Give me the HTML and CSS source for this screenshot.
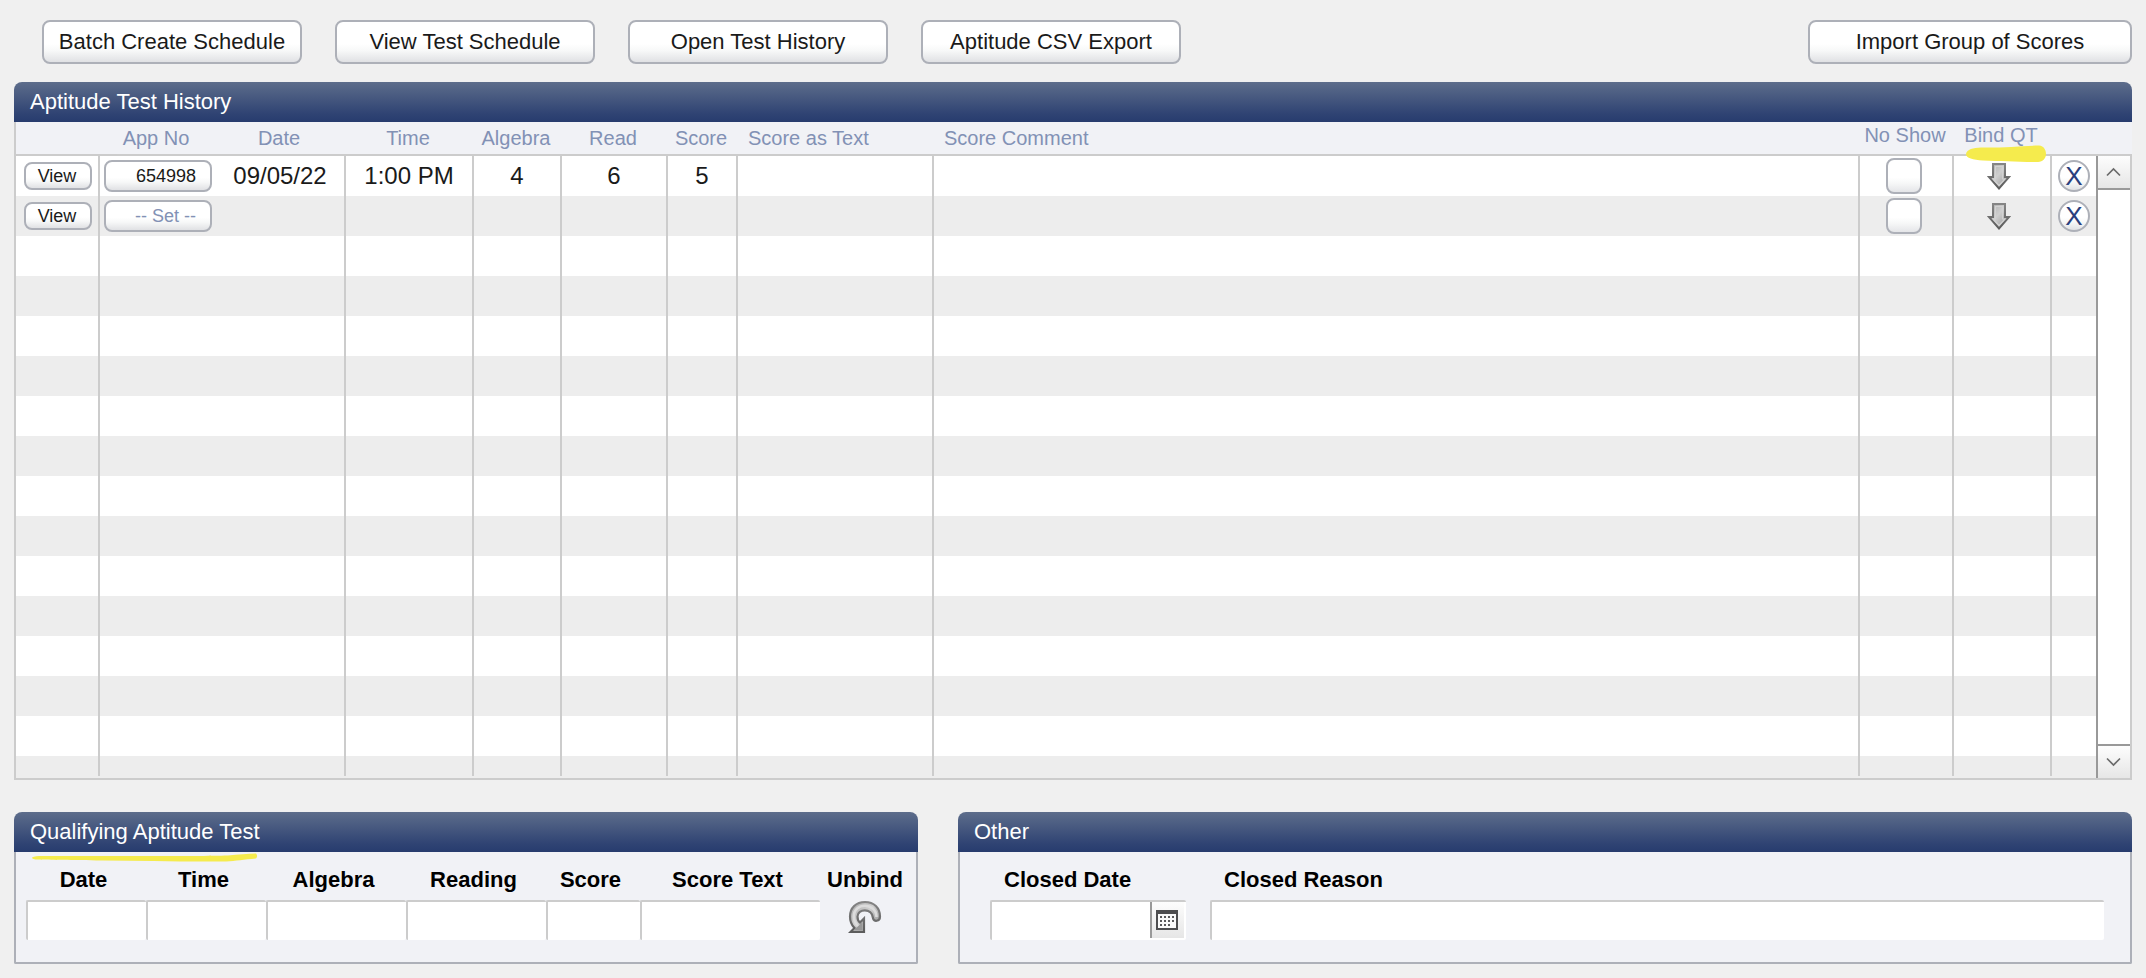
FILE: index.html
```html
<!DOCTYPE html>
<html lang="en">
<head>
<meta charset="utf-8">
<title>Aptitude Tests</title>
<link rel="stylesheet" href="styles.css">
</head>
<body>
<svg class="defs" aria-hidden="true">
  <defs>
    <linearGradient id="metal" x1="0" y1="0" x2="1" y2="1">
      <stop offset="0" stop-color="#a8a8a8"/>
      <stop offset="0.45" stop-color="#cfcfcf"/>
      <stop offset="1" stop-color="#8a8a8a"/>
    </linearGradient>
    <linearGradient id="edge" x1="0" y1="0" x2="0" y2="1">
      <stop offset="0" stop-color="#858585"/>
      <stop offset="1" stop-color="#5c5c5c"/>
    </linearGradient>
    <symbol id="arrow-down" viewBox="0 0 24 27">
      <path d="M6 1H18V14H22L12 25.500L2 14H6Z" fill="url(#metal)" stroke="url(#edge)" stroke-width="2"/>
      <path d="M8.500 3.500H15.500V16H18L12 22.500L6 16H8.500Z" fill="none" stroke="#d2d2d2" stroke-width="1.200"/>
    </symbol>
  </defs>
</svg>

<nav class="toolbar">
  <button class="btn btn-main" type="button">Batch Create Schedule</button>
  <button class="btn btn-main" type="button">View Test Schedule</button>
  <button class="btn btn-main" type="button">Open Test History</button>
  <button class="btn btn-main" type="button">Aptitude CSV Export</button>
  <button class="btn btn-main btn-import" type="button">Import Group of Scores</button>
</nav>

<section class="history">
  <h2 class="panel-title">Aptitude Test History</h2>
  <div class="history-body">
    <div class="table-area">
      <table class="grid">
        <colgroup>
          <col class="c-view"><col class="c-app"><col class="c-date"><col class="c-time">
          <col class="c-algebra"><col class="c-read"><col class="c-score"><col class="c-text">
          <col><col class="c-noshow"><col class="c-bind"><col class="c-remove">
        </colgroup>
        <thead>
          <tr>
            <th></th><th>App No</th><th>Date</th><th>Time</th><th>Algebra</th><th>Read</th><th>Score</th>
            <th class="left">Score as Text</th><th class="left">Score Comment</th>
            <th class="raised">No Show</th>
            <th class="raised marked">Bind QT
              <svg class="mark-bind" viewBox="0 0 82 18" aria-hidden="true"><path d="M1 9C2 4 8 3 16 2.500C36 3 56 1 74 .5C79 1 81 5 81 9C81 13 78 17 73 17C52 17 36 16 18 15.500C8 15 1 13 1 9Z" fill="#f5eb4d"/></svg>
            </th>
            <th></th>
          </tr>
        </thead>
        <tbody>
          <tr>
            <td><button class="btn btn-view" type="button">View</button></td>
            <td class="open"><button class="btn btn-app" type="button">654998</button></td>
            <td>09/05/22</td><td>1:00 PM</td><td>4</td><td>6</td><td>5</td><td></td><td></td>
            <td><input class="check" type="checkbox" aria-label="No Show"></td>
            <td><button class="icon-btn" type="button" aria-label="Bind"><svg width="24" height="27"><use href="#arrow-down"/></svg></button></td>
            <td class="open"><button class="btn btn-remove" type="button">X</button></td>
          </tr>
          <tr>
            <td><button class="btn btn-view" type="button">View</button></td>
            <td class="open"><button class="btn btn-app btn-set" type="button">-- Set --</button></td>
            <td></td><td></td><td></td><td></td><td></td><td></td><td></td>
            <td><input class="check" type="checkbox" aria-label="No Show"></td>
            <td><button class="icon-btn" type="button" aria-label="Bind"><svg width="24" height="27"><use href="#arrow-down"/></svg></button></td>
            <td class="open"><button class="btn btn-remove" type="button">X</button></td>
          </tr>
          <tr><td></td><td class="open"></td><td></td><td></td><td></td><td></td><td></td><td></td><td></td><td></td><td></td><td class="open"></td></tr>
          <tr><td></td><td class="open"></td><td></td><td></td><td></td><td></td><td></td><td></td><td></td><td></td><td></td><td class="open"></td></tr>
          <tr><td></td><td class="open"></td><td></td><td></td><td></td><td></td><td></td><td></td><td></td><td></td><td></td><td class="open"></td></tr>
          <tr><td></td><td class="open"></td><td></td><td></td><td></td><td></td><td></td><td></td><td></td><td></td><td></td><td class="open"></td></tr>
          <tr><td></td><td class="open"></td><td></td><td></td><td></td><td></td><td></td><td></td><td></td><td></td><td></td><td class="open"></td></tr>
          <tr><td></td><td class="open"></td><td></td><td></td><td></td><td></td><td></td><td></td><td></td><td></td><td></td><td class="open"></td></tr>
          <tr><td></td><td class="open"></td><td></td><td></td><td></td><td></td><td></td><td></td><td></td><td></td><td></td><td class="open"></td></tr>
          <tr><td></td><td class="open"></td><td></td><td></td><td></td><td></td><td></td><td></td><td></td><td></td><td></td><td class="open"></td></tr>
          <tr><td></td><td class="open"></td><td></td><td></td><td></td><td></td><td></td><td></td><td></td><td></td><td></td><td class="open"></td></tr>
          <tr><td></td><td class="open"></td><td></td><td></td><td></td><td></td><td></td><td></td><td></td><td></td><td></td><td class="open"></td></tr>
          <tr><td></td><td class="open"></td><td></td><td></td><td></td><td></td><td></td><td></td><td></td><td></td><td></td><td class="open"></td></tr>
          <tr><td></td><td class="open"></td><td></td><td></td><td></td><td></td><td></td><td></td><td></td><td></td><td></td><td class="open"></td></tr>
          <tr><td></td><td class="open"></td><td></td><td></td><td></td><td></td><td></td><td></td><td></td><td></td><td></td><td class="open"></td></tr>
          <tr class="partial"><td></td><td class="open"></td><td></td><td></td><td></td><td></td><td></td><td></td><td></td><td></td><td></td><td class="open"></td></tr>
        </tbody>
      </table>
    </div>
    <div class="scroll">
      <div class="scroll-head"></div>
      <div class="scroll-track">
        <button class="scroll-btn scroll-up" type="button" aria-label="Scroll up"><svg width="16" height="10" viewBox="0 0 16 10"><path d="M1 8.500L7.500 2L14 8.500" fill="none" stroke="#6b6b6b" stroke-width="1.700"/></svg></button>
        <button class="scroll-btn scroll-down" type="button" aria-label="Scroll down"><svg width="16" height="10" viewBox="0 0 16 10"><path d="M1 1.500L7.500 8L14 1.500" fill="none" stroke="#6b6b6b" stroke-width="1.700"/></svg></button>
      </div>
    </div>
  </div>
</section>

<div class="panels">
  <section class="panel panel-qualifying">
    <h2 class="panel-title">Qualifying Aptitude Test
      <svg class="mark-title" viewBox="0 0 226 10" aria-hidden="true"><path d="M0 4.500C2 3 6 3 10 3H100C150 3 180 3 196 2.500C206 1 216 1 224 .5C225.500 2 225.500 4 224 5.500C212 6.500 204 8 194 8.500C150 9 110 7.500 70 7.500C40 7 16 7 6 6.500C2 6.500 0 6 0 4.500Z" fill="#f5eb4d"/></svg>
    </h2>
    <div class="panel-body qualifying">
      <div class="field"><label for="q-date">Date</label><input id="q-date" type="text"></div>
      <div class="field"><label for="q-time">Time</label><input id="q-time" type="text"></div>
      <div class="field"><label for="q-algebra">Algebra</label><input id="q-algebra" type="text"></div>
      <div class="field"><label for="q-reading">Reading</label><input id="q-reading" type="text"></div>
      <div class="field"><label for="q-score">Score</label><input id="q-score" type="text"></div>
      <div class="field"><label for="q-text">Score Text</label><input id="q-text" type="text"></div>
      <div class="field unbind"><span id="unbind-label">Unbind</span>
        <button class="icon-btn" type="button" aria-labelledby="unbind-label"><svg width="34" height="34" viewBox="-1 -1 34 34">
          <path d="M1.500 31L5.500 27C2 23.500 1 19 1 15.500C1 7 7 1 16 1C25 1 31 7 31 15.500C31 20.500 24.500 21.300 24 17C23 6.500 8.500 7.500 8.500 15.500C8.500 18.500 9.500 20.500 11 21.500L15 17.500V31Z" fill="url(#metal)" stroke="url(#edge)" stroke-width="2.200"/>
          <path d="M4.800 16C4.500 1 27 1 27.500 16M4.800 16C5 20.500 7 23.500 10 26" fill="none" stroke="#dcdcdc" stroke-width="2.600"/>
          <path d="M4.500 29.500L13.500 21V29.500Z" fill="#979797"/>
        </svg></button>
      </div>
    </div>
  </section>

  <section class="panel panel-other">
    <h2 class="panel-title">Other</h2>
    <div class="panel-body other">
      <div class="field closed-date">
        <label for="closed-date">Closed Date</label>
        <div class="date-box">
          <input id="closed-date" type="text">
          <button class="calendar" type="button" aria-label="Pick a date"><svg width="22" height="20" viewBox="0 0 22 20">
            <path d="M0 0H22V20H0Z" fill="#4d4d4f"/><path d="M2 4H20V18H2Z" fill="#fafafa"/>
            <path d="M4 7H18M4 11H18" stroke="#5a5a5c" stroke-width="2" stroke-dasharray="2 2"/>
            <path d="M4 15H14" stroke="#5a5a5c" stroke-width="2" stroke-dasharray="2 2"/>
          </svg></button>
        </div>
      </div>
      <div class="field closed-reason">
        <label for="closed-reason">Closed Reason</label>
        <input id="closed-reason" type="text">
      </div>
    </div>
  </section>
</div>
</body>
</html>
```
FILE: styles.css
```css
* { box-sizing: border-box; }

body {
  margin: 0;
  padding: 20px 14px 14px;
  background: #f0f0f0;
  color: #1a1a1a;
  font-family: "Liberation Sans", Arial, Helvetica, sans-serif;
}

button, input { font: inherit; color: inherit; margin: 0; padding: 0; }

.defs { position: absolute; width: 0; height: 0; }

.btn {
  border: 2px solid #adb0b8;
  border-radius: 8px;
  background: linear-gradient(#ffffff 55%, #f7f8f8 72%, #e0e1e4);
}

.icon-btn { display: inline-flex; border: 0; background: none; }

/* Toolbar */
.toolbar { display: flex; gap: 33px; padding-left: 28px; margin-bottom: 18px; }
.btn-main { width: 260px; height: 44px; font-size: 22px; white-space: nowrap; }
.btn-import { width: 324px; margin-left: auto; }

/* Panel headings */
.panel-title {
  position: relative;
  margin: 0;
  padding: 0 16px;
  border-radius: 8px 8px 0 0;
  background: linear-gradient(#5d6d8b, #2f4373 80%, #273c6e);
  color: #ffffff;
  font-size: 22px;
  font-weight: 400;
  line-height: 40px;
}
.mark-title { position: absolute; left: 18px; top: 41px; width: 226px; height: 10px; }

/* History table */
.history { margin-bottom: 32px; }
.history-body { display: flex; border-bottom: 2px solid #cccccc; }
.table-area { flex: 1; padding-bottom: 2px; border-left: 2px solid #cccccc; background: #ededed; }
.grid { width: 100%; table-layout: fixed; border-collapse: separate; border-spacing: 0; }
.c-view { width: 84px; }
.c-app { width: 116px; }
.c-date { width: 130px; }
.c-time { width: 128px; }
.c-algebra { width: 88px; }
.c-read { width: 106px; }
.c-score { width: 70px; }
.c-text { width: 196px; }
.c-noshow { width: 94px; }
.c-bind { width: 98px; }
.c-remove { width: 44px; }

.grid th {
  height: 34px;
  padding: 0 4px 0 0;
  border-bottom: 2px solid #cccccc;
  background: #f1f2f6;
  color: #8291b5;
  font-size: 20px;
  font-weight: 400;
  line-height: 24px;
  white-space: nowrap;
}
.grid th.left { padding-left: 10px; text-align: left; }
.grid th.raised { padding: 0 4px 6px 0; }
.grid th.marked { position: relative; }
.mark-bind { position: absolute; left: 11px; top: 23px; width: 82px; height: 18px; }

.grid td {
  height: 40px;
  padding: 0;
  border-right: 2px solid #cccccc;
  background: #ffffff;
  font-size: 24px;
  line-height: 28px;
  text-align: center;
}
.grid tr:nth-child(even) td { background: #ededed; }
.grid td.open { border-right: 0; }
.grid .partial td { height: 20px; }
.grid td > * { vertical-align: middle; }

.grid .btn { display: block; margin: 0 auto; }
.grid .btn-view { width: 68px; height: 28px; margin-left: 8px; padding-right: 2px; font-size: 18px; line-height: 20px; }
.grid .btn-app { width: 108px; height: 32px; margin-left: 4px; padding-right: 14px; font-size: 18px; text-align: right; }
.grid .btn-set { color: #8291b5; }
.grid .btn-remove { width: 32px; height: 32px; border-radius: 50%; color: #2a3f7d; font-size: 26px; line-height: 28px; }
.grid .icon-btn { display: flex; justify-content: center; width: 90px; }
.grid .check {
  display: block;
  width: 36px;
  height: 36px;
  margin: 0 26px;
  appearance: none;
  border: 2px solid #adb0b8;
  border-radius: 8px;
  background: linear-gradient(#ffffff 55%, #f7f8f8 72%, #e4e5e8);
}

/* Scroll bar */
.scroll { display: flex; flex-direction: column; width: 36px; }
.scroll-head { height: 34px; border-bottom: 2px solid #cccccc; background: #f1f2f6; }
.scroll-track {
  display: flex;
  flex: 1;
  flex-direction: column;
  justify-content: space-between;
  border-left: 2px solid #999999;
  border-right: 2px solid #cccccc;
  background: #ffffff;
}
.scroll-btn {
  display: flex;
  align-items: center;
  justify-content: center;
  height: 34px;
  border: 0 solid #999999;
  background: linear-gradient(#fdfdfd, #e6e6e6);
}
.scroll-up { border-bottom-width: 2px; }
.scroll-down { border-top-width: 2px; }

/* Lower panels */
.panels { display: flex; gap: 40px; }
.panel-qualifying { flex: 904 1 0; }
.panel-other { flex: 1174 1 0; }
.panel-body {
  border: 2px solid #adb0b8;
  border-top: 0;
  border-radius: 0 0 2px 2px;
  background: #f1f2f6;
  color: #000000;
  font-size: 22px;
  font-weight: 700;
  line-height: 24px;
}
.qualifying {
  display: grid;
  grid-template-columns: 120fr 120fr 140fr 140fr 94fr 180fr 90fr;
  padding: 16px 6px 22px 10px;
  text-align: center;
}
.qualifying label { padding-right: 5px; }
.field { display: flex; flex-direction: column; gap: 8px; min-width: 0; }
.field input {
  width: 100%;
  height: 40px;
  border: 0 solid #cccccc;
  border-width: 2px 0 0 2px;
  border-radius: 2px;
  background: #ffffff;
  font-weight: 400;
}
.unbind { align-items: center; }

.other { display: flex; gap: 24px; padding: 16px 26px 22px 30px; }
.other label { padding-left: 14px; }
.closed-date { width: 196px; }
.closed-reason { flex: 1; }
.date-box {
  display: flex;
  height: 40px;
  padding: 0 2px 2px 0;
  border: 0 solid #cccccc;
  border-width: 2px 0 0 2px;
  border-radius: 2px;
  background: #ffffff;
}
.date-box input { flex: 1; min-width: 0; height: 36px; border: 0; }
.calendar {
  display: flex;
  align-items: center;
  justify-content: center;
  width: 34px;
  padding-right: 2px;
  border: 0;
  border-left: 2px solid #999999;
  background: linear-gradient(#fdfdfd, #e6e6e6);
}
```
